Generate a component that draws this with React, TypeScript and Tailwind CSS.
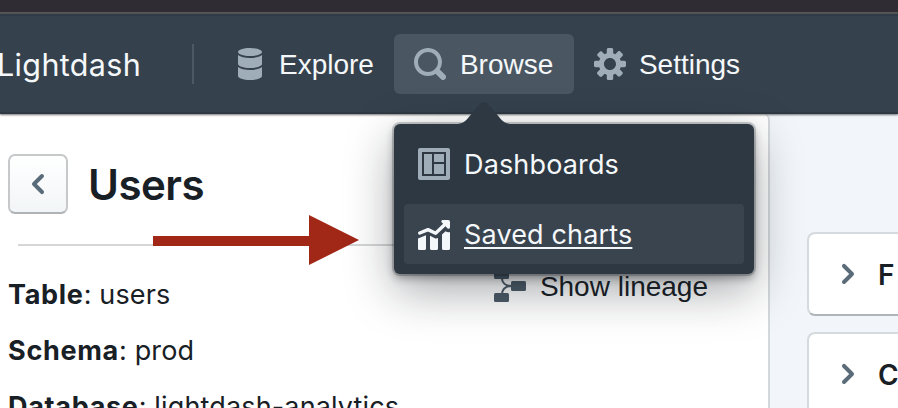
import React from "react";

const paths = {
  database:
    "M8 4c3.31 0 6-.9 6-2s-2.69-2-6-2C4.68 0 2 .9 2 2s2.68 2 6 2zm-6-.48V8c0 1.1 2.69 2 6 2s6-.9 6-2V3.52C12.78 4.4 10.56 5 8 5s-4.78-.6-6-1.48zm0 6V14c0 1.1 2.69 2 6 2s6-.9 6-2V9.52C12.78 10.4 10.56 11 8 11s-4.78-.6-6-1.48z",
  search:
    "M15.55 13.43l-2.67-2.68a6.94 6.94 0 001.11-3.76c0-3.87-3.13-7-7-7s-7 3.13-7 7 3.13 7 7 7c1.39 0 2.68-.42 3.76-1.11l2.68 2.67a1.498 1.498 0 102.12-2.12zm-8.56-1.44c-2.76 0-5-2.24-5-5s2.24-5 5-5 5 2.24 5 5-2.24 5-5 5z",
  cog:
    "M15.19 6.39h-1.85c-.11-.37-.27-.71-.45-1.04l1.36-1.36c.31-.31.31-.82 0-1.13l-1.13-1.13c-.31-.31-.82-.31-1.13 0l-1.36 1.36c-.33-.17-.67-.33-1.04-.44V.79c0-.44-.36-.8-.8-.8h-1.6c-.44 0-.8.36-.8.8v1.86c-.39.12-.75.28-1.1.47l-1.3-1.3c-.3-.3-.79-.3-1.09 0L1.82 2.91c-.3.3-.3.79 0 1.09l1.3 1.3c-.2.34-.36.7-.48 1.09H.79c-.44 0-.8.36-.8.8v1.6c0 .44.36.8.8.8h1.85c.11.37.27.71.45 1.04l-1.36 1.36c-.31.31-.31.82 0 1.13l1.13 1.13c.31.31.82.31 1.13 0l1.36-1.36c.33.18.67.33 1.04.44v1.86c0 .44.36.8.8.8h1.6c.44 0 .8-.36.8-.8v-1.86c.39-.12.75-.28 1.1-.47l1.3 1.3c.3.3.79.3 1.09 0l1.09-1.09c.3-.3.3-.79 0-1.09l-1.3-1.3c.19-.35.36-.71.48-1.1h1.85c.44 0 .8-.36.8-.8v-1.6a.816.816 0 00-.81-.79zm-7.2 4.6c-1.66 0-3-1.34-3-3s1.34-3 3-3 3 1.34 3 3-1.34 3-3 3z",
  dashboard:
    "M13 8H8v5h5V8zm0-5H8v4h5V3zm2-3H1C.45 0 0 .45 0 1v14c0 .55.45 1 1 1h14c.55 0 1-.45 1-1V1c0-.55-.45-1-1-1zm-1 14H2V2h12v12zM7 3H3v10h4V3z",
  chevronLeft:
    "M7.41 8l3.29-3.29c.19-.18.3-.43.3-.71a1.003 1.003 0 00-1.71-.71l-4 4C5.11 7.47 5 7.72 5 8c0 .28.11.53.29.71l4 4a1.003 1.003 0 001.42-1.42L7.41 8z",
  chevronRight:
    "M10.71 7.29l-4-4a1.003 1.003 0 00-1.42 1.42L8.59 8 5.3 11.29c-.19.18-.3.43-.3.71a1.003 1.003 0 001.71.71l4-4c.18-.18.29-.43.29-.71 0-.28-.11-.53-.29-.71z",
};

function Icon({ name, className = "" }: { name: keyof typeof paths; className?: string }) {
  return (
    <svg viewBox="0 0 16 16" className={`size-8 shrink-0 ${className}`} fill="currentColor" fillRule="evenodd">
      <path d={paths[name]} />
    </svg>
  );
}

function ChartIcon() {
  return (
    <svg viewBox="0 0 16 16" className="size-8 shrink-0" fill="currentColor">
      <path d="M0 10.3L4 8.6V15.2a.8.8 0 01-.8.8H.8a.8.8 0 01-.8-.8z" />
      <path d="M6 8.9l2.7 1.3c.5.1.9 0 1.3-.2v5.2a.8.8 0 01-.8.8H6.8a.8.8 0 01-.8-.8z" />
      <path d="M12 8.3l1.8-1.7c.6.5 1.4.6 2.2.4v8.2a.8.8 0 01-.8.8h-2.4a.8.8 0 01-.8-.8z" />
      <path d="M12.4 1h2.7a.9.9 0 01.9.9v2.7c0 .7-.8 1-1.3.5L11.9 2.3c-.5-.5-.2-1.3.5-1.3z" />
      <path
        d="M.9 7.5L5 5.8l3.8 1.8 5-4.7"
        fill="none"
        stroke="currentColor"
        strokeWidth="1.7"
        strokeLinecap="round"
        strokeLinejoin="round"
      />
    </svg>
  );
}

function NavButton({ icon, label, active }: { icon: keyof typeof paths; label: string; active?: boolean }) {
  return (
    <div
      className={`flex h-[60px] items-center rounded-[6px] px-5 font-['Liberation_Sans',Arial,sans-serif] text-[28px] text-[#f5f8fa] ${active ? "w-[180px] gap-[14px] bg-[#4a5763]" : "gap-[13px]"}`}
    >
      <Icon name={icon} className="text-[#9fadb8]" />
      <span className="pt-[2px]">{label}</span>
    </div>
  );
}

function Section({ letter }: { letter: string }) {
  return (
    <div className="flex h-[84px] w-[120px] shrink-0 items-center gap-[14px] rounded-[8px] border-2 border-[#d5dade] border-b-[#aeb5bb] bg-white pl-[23px] text-[28px] font-semibold">
      <Icon name="chevronRight" className="text-[#5a6b7a]" />
      <span className="pt-[2px]">{letter}</span>
    </div>
  );
}

function Detail({ name, value }: { name: string; value: string }) {
  return (
    <p className="h-14 whitespace-nowrap text-[27px] leading-[34px] tracking-[0.15px]">
      <strong className="font-bold tracking-[0.7px]">{name}</strong>: {value}
    </p>
  );
}

export default function App() {
  return (
    <div className="relative flex h-[408px] w-[898px] flex-col overflow-hidden bg-[#f2f6fa] font-[Inter,sans-serif] text-[#182026]">
      <div className="h-[14px] shrink-0 border-b-2 border-[#565656] bg-[#2f2d33]" />
      <header className="z-10 flex h-[100px] shrink-0 items-center border-y-2 border-t-[#2f3b46] border-b-[#2e3943] bg-[#35424d] shadow-[0_1px_2px_rgba(0,0,0,0.55)]">
        <div className="-ml-[3px] w-[195px] pt-[2px] text-[30.5px] tracking-[0.35px] text-[#f5f8fa]">Lightdash</div>
        <div className="h-10 w-[2px] bg-[#4c5964]" />
        <nav className="ml-5 flex">
          <NavButton icon="database" label="Explore" />
          <NavButton icon="search" label="Browse" active />
          <NavButton icon="cog" label="Settings" />
        </nav>
      </header>

      <main className="flex min-h-0 flex-1">
        <section className="w-[770px] shrink-0 rounded-tr-[6px] border-r-2 border-[#d3d8dc] bg-white pl-2 pt-10">
          <div className="flex items-center gap-5">
            <div className="flex size-[60px] items-center justify-center rounded-[7px] border-2 border-[#c6c8ca] border-b-[#afb3b6] bg-gradient-to-b from-white to-[#f2f5f7]">
              <Icon name="chevronLeft" className="text-[#5a6b7a]" />
            </div>
            <h1 className="h-[60px] text-[42px] font-semibold leading-[62px] tracking-[-0.5px]">Users</h1>
          </div>
          <div className="ml-[10px] mr-[18px] mt-[30px] h-[2px] bg-[#d5d6d7]" />
          <div className="flex justify-between pr-[60px] pt-8">
            <div>
              <Detail name="Table" value="users" />
              <Detail name="Schema" value="prod" />
              <Detail name="Database" value="lightdash-analytics" />
            </div>
            <div className="-mt-[7px] flex h-8 items-center gap-[14px] font-['Liberation_Sans',Arial,sans-serif] text-[28px]">
              <svg className="size-8" viewBox="0 0 32 32" fill="#4c5c69">
                <rect y="0" width="15" height="8" rx="1.5" />
                <rect x="17" y="10" width="15" height="10" rx="1.5" />
                <rect y="22" width="15" height="9" rx="1.5" />
                <path d="M8 7C8 12 12 15 18 15C12 15 8 18 8 24" fill="none" stroke="#4c5c69" strokeWidth="2" />
              </svg>
              <span className="whitespace-nowrap">Show lineage</span>
            </div>
          </div>
        </section>
        <aside className="flex flex-col gap-4 pl-[37px] pt-[118px]">
          <Section letter="F" />
          <Section letter="C" />
        </aside>
      </main>

      <svg className="absolute left-[152px] top-[214px] z-10" width="208" height="52" viewBox="0 0 208 52">
        <path d="M1 22H157V1L207 26L157 51V32H1Z" fill="#a12717" />
      </svg>

      <div className="absolute left-[394px] top-[124px] z-20 flex h-[150px] w-[360px] flex-col gap-[10px] rounded-[6px] bg-[#2d3843] p-[10px] text-[27px] tracking-[0.15px] text-[#f5f8fa] shadow-[0_0_0_2px_rgba(16,22,26,0.2),0_4px_8px_rgba(16,22,26,0.38),0_16px_48px_rgba(16,22,26,0.38)]">
        <svg className="absolute left-[60px] top-[-22px]" width="60" height="24" viewBox="0 0 60 24">
          <path
            transform="translate(60 0) rotate(90) scale(2.2 2)"
            d="M8.11 6.302c1.015-.936 1.887-2.922 1.887-4.297v26c0-1.378-.868-3.357-1.888-4.297L.925 17.09c-1.237-1.14-1.233-3.034 0-4.17L8.11 6.302z"
            fill="#2d3843"
          />
        </svg>
        <div className="flex h-[60px] w-[340px] items-center gap-[14px] rounded-[4px] px-[14px]">
          <Icon name="dashboard" className="text-[#9fadb8]" />
          <span className="pt-[2px]">Dashboards</span>
        </div>
        <div className="flex h-[60px] w-[340px] items-center gap-[14px] rounded-[4px] bg-[#39444f] px-[14px]">
          <ChartIcon />
          <span className="pt-[2px] underline decoration-2 underline-offset-[3px]">Saved charts</span>
        </div>
      </div>
    </div>
  );
}
